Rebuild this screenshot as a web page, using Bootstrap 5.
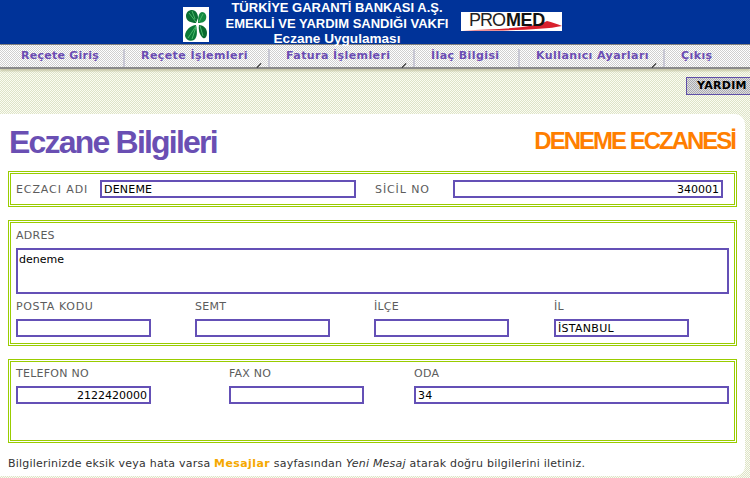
<!DOCTYPE html>
<html lang="tr">
<head>
<meta charset="utf-8">
<title>Eczane Bilgileri</title>
<link rel="stylesheet" href="https://cdn.jsdelivr.net/npm/bootstrap@5.3.0/dist/css/bootstrap.min.css">
<style>
html,body{height:478px;overflow:hidden}
body{font-family:"DejaVu Sans",sans-serif;font-size:11px;background:repeating-conic-gradient(#dde3c8 0 25%,#fbfcf2 0 50%) 0 0/2px 2px;color:#444}
.top-band{height:44px;background:#003399;color:#fff;padding-left:183px}
.clover{width:26px;height:35px;margin-top:7px;background:#fff;flex:none}
.bank{width:240px;margin-left:8px;font:bold 13px/15.5px "Liberation Sans",sans-serif;text-align:center;flex:none}
.bank div:nth-child(3){font-size:13.6px}
.promed{width:101px;height:19px;margin:12px 0 0 4px;background:#fff;flex:none;overflow:visible}
.pm-pro{font:18px "Liberation Sans",sans-serif;letter-spacing:-1px;fill:#222}
.pm-med{font:bold 18px "Liberation Sans",sans-serif;letter-spacing:-.4px;fill:#111}
.menu-bar{height:25px;border-top:1px solid #808080;border-bottom:2px solid #8a8a8a;background:repeating-conic-gradient(#cfcfcf 0 25%,#fff 0 50%) 0 0/2px 2px;box-shadow:0 2px 2px #c8c8a8}
.menu-cell{height:22px;padding:3px 0 0 18px;font-weight:bold;color:#6b4db3;position:relative;white-space:nowrap;letter-spacing:.42px}
.menu-cell:first-child{padding-left:21px;letter-spacing:.25px}
.menu-cell+.menu-cell::before{content:"";position:absolute;left:0;top:4px;bottom:0;width:2px;background:#c8c8d4}
.menu-cell.has-sub::after{content:"";position:absolute;right:6px;bottom:1px;width:6px;height:1px;background:#222;transform:rotate(-45deg)}
.c-a{width:123px}.c-b,.c-c,.c-e{width:145px}.c-d{width:105px}
.help-row{height:45px;padding-top:8px}
.help-btn{width:64px;height:18px;border:1px solid #5f4fa8;border-right:0;background:repeating-conic-gradient(#a8a8b0 0 25%,#e0e0e0 0 50%) 0 0/2px 2px;color:#000;font-weight:bold;line-height:16px;letter-spacing:.3px;padding-left:10px;white-space:nowrap}
.sheet{background:#fff;width:745px;height:362px;border-radius:0 10px 10px 0;padding:0 8px}
.sheet-head{height:57px}
.page-title{font:bold 32px/1 "Liberation Sans",sans-serif;letter-spacing:-1.8px;color:#6a4fb3;margin:12px 0 0 1px}
.shop-name{font:bold 24px/1 "Liberation Sans",sans-serif;letter-spacing:-2px;color:#ff7f00;margin:15px 2px 0 0}
.field-box{border:3px double #99cc00;width:729px;padding:0 5px;margin-bottom:13px;color:#555}
.b1{height:36px;padding-top:6px}.b2{height:126px;padding-top:4px}.b3{height:84px;padding-top:3px}
.lab{line-height:17px;letter-spacing:.25px;color:#5c5c5c;margin-bottom:4px}
.lab.wide{letter-spacing:.65px}
.b1 .lab{margin:1px 0 0;letter-spacing:.9px}
.ent{display:block;height:18px;border:2px solid #6450b6;background:#fff;padding:1px 2px 0;font:11px/13px "DejaVu Sans",sans-serif;color:#000;border-radius:0;outline:0;box-sizing:border-box;letter-spacing:.3px}
.ent.r{text-align:right;letter-spacing:0}
.w135{width:135px}
.area{width:713px;height:46px;resize:none;padding:3px 1px 0;display:block;margin-bottom:4px;letter-spacing:0}
.col-w{flex:none}
.note{margin-top:13px;color:#333;letter-spacing:.22px}
.note b{color:#f5a800;letter-spacing:.4px}
</style>
</head>
<body>
<div class="top-band d-flex">
  <svg class="clover" viewBox="0 0 26 35">
    <path d="M13 16C8 16 3 14 3 9c0-4 3-6 6-6 4 0 6 4 6 8z" fill="#0b6f34"/>
    <path d="M15 16c0-4 0-10 4-11 3 0 5 3 4 7-1 3-4 4-8 4z" fill="#158a42"/>
    <path d="M13 18c1 5 2 12-2 15-4 2-8 0-9-4 0-6 6-11 11-11z" fill="#0b7a38"/>
    <path d="M16 18c4 0 8 3 8 8 0 4-2 6-4 5-3-2-5-8-4-13z" fill="#0a6a30"/>
    <path d="M6 6l7 9M9 4l3 8M20 7l-4 8M5 31l8-12M9 32l4-12M20 29l-3-10" stroke="#49b868" stroke-width="1" fill="none"/>
  </svg>
  <div class="bank"><div>TÜRKİYE GARANTİ BANKASI A.Ş.</div><div>EMEKLİ VE YARDIM SANDIĞI VAKFI</div><div>Eczane Uygulaması</div></div>
  <svg class="promed" viewBox="0 0 101 19"><path d="M1 18.5C40 17 72 16 86 9c5 1 10 3 15 5-18 4-60 5-100 4.5z" fill="#d8202c"/><text x="8" y="14" class="pm-pro">PRO</text><text x="45" y="14" class="pm-med">MED</text></svg>
</div>
<nav class="menu-bar d-flex">
  <div class="menu-cell c-a">Reçete Giriş</div>
  <div class="menu-cell c-b has-sub">Reçete İşlemleri</div>
  <div class="menu-cell c-c has-sub">Fatura İşlemleri</div>
  <div class="menu-cell c-d">İlaç Bilgisi</div>
  <div class="menu-cell c-e has-sub">Kullanıcı Ayarları</div>
  <div class="menu-cell">Çıkış</div>
</nav>
<div class="help-row d-flex justify-content-end"><div class="help-btn">YARDIM</div></div>
<main class="sheet">
  <div class="sheet-head d-flex justify-content-between align-items-start">
    <h1 class="page-title">Eczane Bilgileri</h1>
    <div class="shop-name">DENEME ECZANESİ</div>
  </div>
  <section class="field-box b1 d-flex align-items-start">
    <span class="lab col-w" style="width:84px">ECZACI ADI</span>
    <input class="ent" style="width:256px;letter-spacing:.2px" value="DENEME">
    <span class="lab col-w" style="margin-left:19px;width:78px">SİCİL NO</span>
    <input class="ent r" style="width:270px" value="340001">
  </section>
  <section class="field-box b2">
    <div class="lab">ADRES</div>
    <textarea class="ent area">deneme</textarea>
    <div class="d-flex">
      <div class="col-w" style="width:179px"><div class="lab wide">POSTA KODU</div><input class="ent w135"></div>
      <div class="col-w" style="width:179px"><div class="lab">SEMT</div><input class="ent w135"></div>
      <div class="col-w" style="width:180px"><div class="lab">İLÇE</div><input class="ent w135"></div>
      <div class="col-w"><div class="lab">İL</div><input class="ent w135" value="İSTANBUL"></div>
    </div>
  </section>
  <section class="field-box b3 d-flex">
    <div class="col-w" style="width:213px"><div class="lab">TELEFON NO</div><input class="ent r w135" value="2122420000"></div>
    <div class="col-w" style="width:185px"><div class="lab">FAX NO</div><input class="ent w135"></div>
    <div class="col-w"><div class="lab">ODA</div><input class="ent" style="width:315px" value="34"></div>
  </section>
  <p class="note">Bilgilerinizde eksik veya hata varsa <b>Mesajlar</b> sayfasından <i>Yeni Mesaj</i> atarak doğru bilgilerini iletiniz.</p>
</main>
<script src="https://cdn.jsdelivr.net/npm/bootstrap@5.3.0/dist/js/bootstrap.bundle.min.js"></script>
</body>
</html>
